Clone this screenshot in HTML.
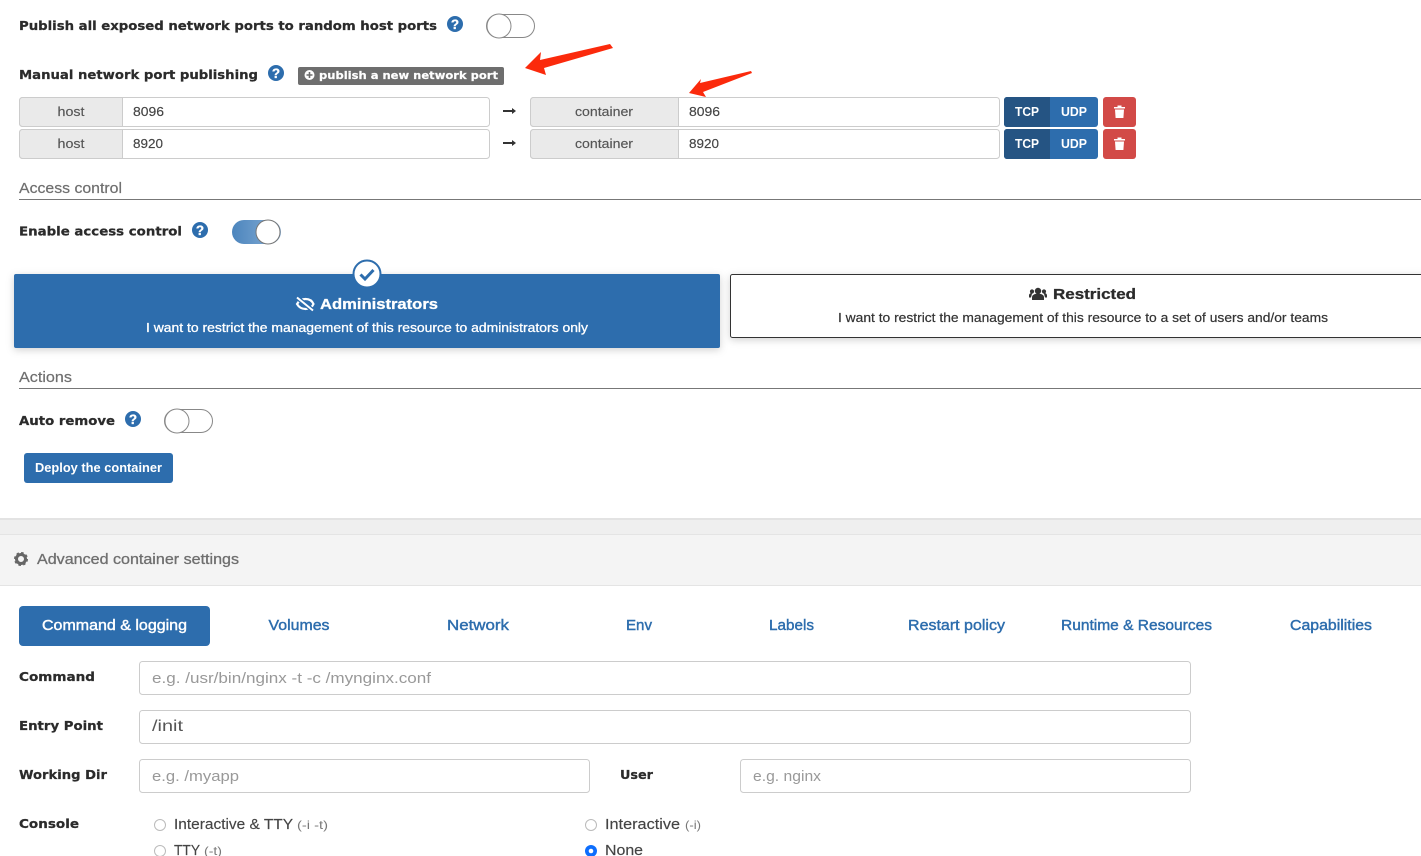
<!DOCTYPE html>
<html lang="en">
<head>
<meta charset="utf-8">
<title>Container settings</title>
<style>
html,body{margin:0;padding:0;background:#fff;width:1421px;height:856px;overflow:hidden}
svg{display:block}
text{font-family:"Liberation Sans",sans-serif;white-space:pre}
.b{font-family:"DejaVu Sans",sans-serif;font-weight:700;font-size:12.5px;fill:#2b2b2b;stroke:#2b2b2b;stroke-width:.25px}
.m{font-size:13px;fill:#555;stroke:#555;stroke-width:.15px}
.v{font-size:13px;fill:#444;stroke:#444;stroke-width:.15px}
.h{font-size:14.5px;fill:#6f6f6f;stroke:#6f6f6f;stroke-width:.2px}
.w{font-size:13px;font-weight:700;fill:#fff}
.t{font-size:14.5px;fill:#2d6dad;stroke:#2d6dad;stroke-width:.4px}
.p{font-size:15px;fill:#999}
.r{font-size:14.5px;fill:#444;stroke:#444;stroke-width:.15px}
.s{font-size:12px;fill:#777}
.q{font-family:"Liberation Sans",sans-serif;font-size:13.5px;font-weight:700;fill:#fff;text-anchor:middle;stroke:#fff;stroke-width:.3px}
.inp{fill:#fff;stroke:#ccc}
.add{fill:#eaeaea;stroke:#ccc}
</style>
</head>
<body>
<svg width="1421" height="856" viewBox="0 0 1421 856" xmlns="http://www.w3.org/2000/svg">
<defs>
<linearGradient id="tg" x1="0" x2="1" y1="0" y2="0"><stop offset="0" stop-color="#4c85bd"/><stop offset="1" stop-color="#86aed6"/></linearGradient>
</defs>
<rect width="1421" height="856" fill="#fff"/>

<!-- Publish all -->
<text class="b" x="19" y="30" textLength="418" lengthAdjust="spacingAndGlyphs">Publish all exposed network ports to random host ports</text>
<circle cx="455" cy="24" r="8" fill="#2d6dad"/><text class="q" x="455" y="29">?</text>
<rect x="486.500" y="14.500" width="48" height="23" rx="11.500" fill="#fff" stroke="#888"/>
<circle cx="499" cy="26" r="12" fill="#fff" stroke="#888"/>

<!-- Manual -->
<text class="b" x="19" y="79" textLength="239" lengthAdjust="spacingAndGlyphs">Manual network port publishing</text>
<circle cx="276" cy="73" r="8" fill="#2d6dad"/><text class="q" x="276" y="78">?</text>
<rect x="298" y="67" width="206" height="18" rx="2" fill="#6e6e6e"/>
<circle cx="309.500" cy="75" r="5" fill="#fff"/>
<path d="M309.500 72v6M306.500 75h6" stroke="#6e6e6e" stroke-width="1.600"/>
<text x="319" y="79" font-size="11" font-weight="700" fill="#fff" stroke="#fff" stroke-width=".2" style="font-family:'DejaVu Sans',sans-serif" textLength="179" lengthAdjust="spacingAndGlyphs">publish a new network port</text>

<!-- Arrows -->
<polygon points="525,68 541,52 540,60 610,44 613,48 544,68 546,75" fill="#fb2a0c"/>
<polygon points="689,93 701,79 700,83 751,71 752,73 703,92 706,97" fill="#fb2a0c"/>

<!-- Port row 1 -->
<rect class="inp" x="19.500" y="97.500" width="470" height="29" rx="3"/>
<path d="M122.500 97.500H22.500a3 3 0 0 0-3 3v23a3 3 0 0 0 3 3h100z" class="add"/>
<text class="m" x="57.500" y="116" textLength="27" lengthAdjust="spacingAndGlyphs">host</text>
<text class="v" x="133" y="116" textLength="31" lengthAdjust="spacingAndGlyphs">8096</text>
<path d="M503 111h10" stroke="#333" stroke-width="2"/><path d="M512 108l4 3-4 3z" fill="#333"/>
<rect class="inp" x="530.500" y="97.500" width="469" height="29" rx="3"/>
<path d="M678.500 97.500H533.500a3 3 0 0 0-3 3v23a3 3 0 0 0 3 3h145z" class="add"/>
<text class="m" x="575" y="116" textLength="58" lengthAdjust="spacingAndGlyphs">container</text>
<text class="v" x="689" y="116" textLength="31" lengthAdjust="spacingAndGlyphs">8096</text>
<rect x="1004" y="97" width="94" height="30" rx="3" fill="#2d6dad"/>
<path d="M1050 97h-43a3 3 0 0 0-3 3v24a3 3 0 0 0 3 3h43z" fill="#255483"/>
<text class="w" x="1015" y="116" textLength="24" lengthAdjust="spacingAndGlyphs">TCP</text>
<text class="w" x="1061" y="116" textLength="26" lengthAdjust="spacingAndGlyphs">UDP</text>
<rect x="1103" y="97" width="33" height="30" rx="3" fill="#d24a47"/>
<path d="M1114 107h11v1.500h-11zM1117.500 105.500h4v1.500h-4zM1115 109.500h9l-.6 8.500h-7.800z" fill="#fff"/>

<!-- Port row 2 -->
<rect class="inp" x="19.500" y="129.500" width="470" height="29" rx="3"/>
<path d="M122.500 129.500H22.500a3 3 0 0 0-3 3v23a3 3 0 0 0 3 3h100z" class="add"/>
<text class="m" x="57.500" y="148" textLength="27" lengthAdjust="spacingAndGlyphs">host</text>
<text class="v" x="133" y="148" textLength="30" lengthAdjust="spacingAndGlyphs">8920</text>
<path d="M503 143h10" stroke="#333" stroke-width="2"/><path d="M512 140l4 3-4 3z" fill="#333"/>
<rect class="inp" x="530.500" y="129.500" width="469" height="29" rx="3"/>
<path d="M678.500 129.500H533.500a3 3 0 0 0-3 3v23a3 3 0 0 0 3 3h145z" class="add"/>
<text class="m" x="575" y="148" textLength="58" lengthAdjust="spacingAndGlyphs">container</text>
<text class="v" x="689" y="148" textLength="30" lengthAdjust="spacingAndGlyphs">8920</text>
<rect x="1004" y="129" width="94" height="30" rx="3" fill="#2d6dad"/>
<path d="M1050 129h-43a3 3 0 0 0-3 3v24a3 3 0 0 0 3 3h43z" fill="#255483"/>
<text class="w" x="1015" y="148" textLength="24" lengthAdjust="spacingAndGlyphs">TCP</text>
<text class="w" x="1061" y="148" textLength="26" lengthAdjust="spacingAndGlyphs">UDP</text>
<rect x="1103" y="129" width="33" height="30" rx="3" fill="#d24a47"/>
<path d="M1114 139h11v1.500h-11zM1117.500 137.500h4v1.500h-4zM1115 141.500h9l-.6 8.500h-7.800z" fill="#fff"/>

<!-- Access control -->
<text class="h" x="19" y="193" textLength="103" lengthAdjust="spacingAndGlyphs">Access control</text>
<rect x="19" y="199" width="1402" height="1" fill="#777"/>
<text class="b" x="19" y="235.500" textLength="163" lengthAdjust="spacingAndGlyphs">Enable access control</text>
<circle cx="200" cy="230" r="8" fill="#2d6dad"/><text class="q" x="200" y="235">?</text>
<rect x="232" y="220" width="49" height="24" rx="12" fill="url(#tg)"/>
<circle cx="268" cy="232" r="12" fill="#fff" stroke="#777"/>

<!-- Administrators -->
<rect x="14" y="274" width="706" height="74" rx="2" fill="#2d6dad" style="filter:drop-shadow(0 2px 4px rgba(0,0,0,.18))"/>
<circle cx="367" cy="274" r="13.500" fill="#fff" stroke="#2d6dad" stroke-width="2"/>
<path d="M360.500 274.500l4.500 4.500 8.500-9" fill="none" stroke="#2d6dad" stroke-width="3"/>
<path d="M297 304c2-3.500 5-5 8.500-5s6.500 1.500 8 5c-1.500 3.500-4.500 5-8 5s-6.500-1.500-8.500-5z" fill="none" stroke="#fff" stroke-width="2.200"/>
<path d="M297 297.500l16 13" stroke="#2d6dad" stroke-width="4.500"/>
<path d="M297 297.500l16 13" stroke="#fff" stroke-width="2"/>
<text x="320" y="309" font-size="15" font-weight="700" fill="#fff" stroke="#fff" stroke-width=".3" textLength="118" lengthAdjust="spacingAndGlyphs">Administrators</text>
<text x="146" y="332" font-size="13" fill="#fff" stroke="#fff" stroke-width=".3" textLength="442" lengthAdjust="spacingAndGlyphs">I want to restrict the management of this resource to administrators only</text>

<!-- Restricted -->
<rect x="730.500" y="274.500" width="710" height="63" rx="2" fill="#fff" stroke="#333" style="filter:drop-shadow(0 2px 4px rgba(0,0,0,.18))"/>
<g fill="#333">
<circle cx="1038" cy="291" r="3.200"/>
<path d="M1032 300v-2.500c0-2.500 2-3.800 6-3.800s6 1.300 6 3.800v2.500z"/>
<circle cx="1032" cy="291.500" r="2.100"/><circle cx="1044" cy="291.500" r="2.100"/>
<path d="M1029 297.500v-2c0-1.500 1-2.500 3.200-2.500l-1.200 4.500zM1047 297.500v-2c0-1.500-1-2.500-3.200-2.500l1.200 4.500z"/>
</g>
<text x="1053" y="299" font-size="15" font-weight="700" fill="#2b2b2b" stroke="#2b2b2b" stroke-width=".3" textLength="83" lengthAdjust="spacingAndGlyphs">Restricted</text>
<text x="838" y="322" font-size="13" fill="#333" stroke="#333" stroke-width=".2" textLength="490" lengthAdjust="spacingAndGlyphs">I want to restrict the management of this resource to a set of users and/or teams</text>

<!-- Actions -->
<text class="h" x="19" y="382" textLength="53" lengthAdjust="spacingAndGlyphs">Actions</text>
<rect x="19" y="388" width="1402" height="1" fill="#777"/>
<text class="b" x="19" y="425" textLength="96" lengthAdjust="spacingAndGlyphs">Auto remove</text>
<circle cx="133" cy="419" r="8" fill="#2d6dad"/><text class="q" x="133" y="424">?</text>
<rect x="164.500" y="409.500" width="48" height="23" rx="11.500" fill="#fff" stroke="#888"/>
<circle cx="177" cy="421" r="12" fill="#fff" stroke="#888"/>
<rect x="24" y="453" width="149" height="30" rx="3" fill="#2d6dad"/>
<text class="w" x="35" y="472" textLength="127" lengthAdjust="spacingAndGlyphs">Deploy the container</text>

<!-- Advanced header -->
<rect x="0" y="518" width="1421" height="2" fill="#e3e3e3"/>
<rect x="0" y="520" width="1421" height="14" fill="#efefef"/>
<rect x="0" y="534" width="1421" height="1" fill="#e4e4e4"/>
<rect x="0" y="535" width="1421" height="50" fill="#f4f4f4"/>
<rect x="0" y="585" width="1421" height="1" fill="#e4e4e4"/>
<circle cx="21" cy="559" r="4.500" fill="none" stroke="#666" stroke-width="3"/>
<circle cx="21" cy="559" r="6" fill="none" stroke="#666" stroke-width="2" stroke-dasharray="2.500 2.200"/>
<text x="37" y="564" font-size="14.500" fill="#6f6f6f" stroke="#6f6f6f" stroke-width=".3" textLength="202" lengthAdjust="spacingAndGlyphs">Advanced container settings</text>

<!-- Tabs -->
<rect x="19" y="606" width="191" height="40" rx="4" fill="#2d6dad"/>
<text x="42" y="630" font-size="14.500" fill="#fff" stroke="#fff" stroke-width=".4" textLength="145" lengthAdjust="spacingAndGlyphs">Command &amp; logging</text>
<text class="t" x="268.500" y="630" textLength="61" lengthAdjust="spacingAndGlyphs">Volumes</text>
<text class="t" x="447" y="630" textLength="62" lengthAdjust="spacingAndGlyphs">Network</text>
<text class="t" x="626" y="630" textLength="26" lengthAdjust="spacingAndGlyphs">Env</text>
<text class="t" x="769" y="630" textLength="45" lengthAdjust="spacingAndGlyphs">Labels</text>
<text class="t" x="908" y="630" textLength="97" lengthAdjust="spacingAndGlyphs">Restart policy</text>
<text class="t" x="1061" y="630" textLength="151" lengthAdjust="spacingAndGlyphs">Runtime &amp; Resources</text>
<text class="t" x="1290" y="630" textLength="82" lengthAdjust="spacingAndGlyphs">Capabilities</text>

<!-- Form -->
<text class="b" x="19" y="681" textLength="76" lengthAdjust="spacingAndGlyphs">Command</text>
<rect class="inp" x="139.500" y="661.500" width="1051" height="33" rx="3"/>
<text class="p" x="152" y="683" textLength="279" lengthAdjust="spacingAndGlyphs">e.g. /usr/bin/nginx -t -c /mynginx.conf</text>

<text class="b" x="19" y="730" textLength="84" lengthAdjust="spacingAndGlyphs">Entry Point</text>
<rect class="inp" x="139.500" y="710.500" width="1051" height="33" rx="3"/>
<text x="152" y="731" font-size="16" fill="#555" textLength="31" lengthAdjust="spacingAndGlyphs">/init</text>

<text class="b" x="19" y="779" textLength="88" lengthAdjust="spacingAndGlyphs">Working Dir</text>
<rect class="inp" x="139.500" y="759.500" width="450" height="33" rx="3"/>
<text class="p" x="152" y="781" textLength="87" lengthAdjust="spacingAndGlyphs">e.g. /myapp</text>
<text class="b" x="620" y="779" textLength="33" lengthAdjust="spacingAndGlyphs">User</text>
<rect class="inp" x="740.500" y="759.500" width="450" height="33" rx="3"/>
<text class="p" x="753" y="781" textLength="68" lengthAdjust="spacingAndGlyphs">e.g. nginx</text>

<text class="b" x="19" y="828" textLength="60" lengthAdjust="spacingAndGlyphs">Console</text>
<circle cx="160" cy="825" r="5.500" fill="#fff" stroke="#bbb"/>
<text class="r" x="174" y="829" textLength="119" lengthAdjust="spacingAndGlyphs">Interactive &amp; TTY</text>
<text class="s" x="297" y="829" textLength="31" lengthAdjust="spacingAndGlyphs">(-i -t)</text>
<circle cx="591" cy="825" r="5.500" fill="#fff" stroke="#bbb"/>
<text class="r" x="605" y="829" textLength="75" lengthAdjust="spacingAndGlyphs">Interactive</text>
<text class="s" x="685" y="829" textLength="16" lengthAdjust="spacingAndGlyphs">(-i)</text>
<circle cx="160" cy="851" r="5.500" fill="#fff" stroke="#bbb"/>
<text class="r" x="174" y="855" textLength="26" lengthAdjust="spacingAndGlyphs">TTY</text>
<text class="s" x="204" y="855" textLength="18" lengthAdjust="spacingAndGlyphs">(-t)</text>
<circle cx="591" cy="851" r="6" fill="#0d6efd"/><circle cx="591" cy="851" r="2.300" fill="#fff"/>
<text class="r" x="605" y="855" textLength="38" lengthAdjust="spacingAndGlyphs">None</text>
</svg>
</body>
</html>
